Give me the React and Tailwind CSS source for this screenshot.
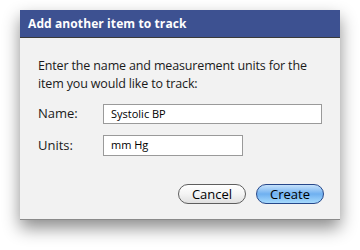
export default function App() {
  return (
    <div className="w-[360px] h-[250px] bg-white pt-[10px] pl-[20px]" style={{ fontFamily: '"Open Sans", "DejaVu Sans", sans-serif' }}>
      <div className="w-[320px] h-[210px] flex flex-col bg-[#f2f2f2] border-b border-[#8a8a8a] shadow-[0_8px_16px_rgba(0,0,0,0.45)]">
        <div className="h-[28px] shrink-0 bg-[#3d5191] border-b border-[#3a3a3a] flex items-center pl-[8px]">
          <span className="text-white text-[12px] font-bold tracking-[0.1px]">Add another item to track</span>
        </div>
        <div className="flex flex-col pl-[18px] pr-[14px] pt-[19px]">
          <p className="text-[12.5px] leading-[18px] tracking-[-0.15px] text-[#1a1a1a]">
            Enter the name and measurement units for the item you would like to track:
          </p>
          <div className="mt-[11px] flex items-center h-[20px]">
            <span className="w-[65px] text-[13px] text-[#1a1a1a]">Name:</span>
            <div className="w-[219px] h-[20px] bg-white border border-[#9a9a9a] flex items-center pl-[7px] text-[11px] text-black">Systolic BP</div>
          </div>
          <div className="mt-[11px] flex items-center h-[21px]">
            <span className="w-[65px] text-[13px] text-[#1a1a1a]">Units:</span>
            <div className="w-[140px] h-[21px] bg-white border border-[#9a9a9a] flex items-center pl-[7px] text-[11px] text-black">mm Hg</div>
          </div>
          <div className="mt-[28px] flex justify-end gap-[10px] pr-[2px]">
            <button className="w-[68px] h-[20px] rounded-full border border-[#5e5e5e] bg-gradient-to-b from-white via-[#f4f4f4] to-[#e0e0e0] text-[13px] leading-none text-black flex items-center justify-center">Cancel</button>
            <button className="w-[68px] h-[20px] rounded-full border border-[#27488a] bg-gradient-to-b from-[#c6e2fb] via-[#6fb0f0] to-[#a6dafd] text-[13px] leading-none text-black flex items-center justify-center">Create</button>
          </div>
        </div>
      </div>
    </div>
  );
}
